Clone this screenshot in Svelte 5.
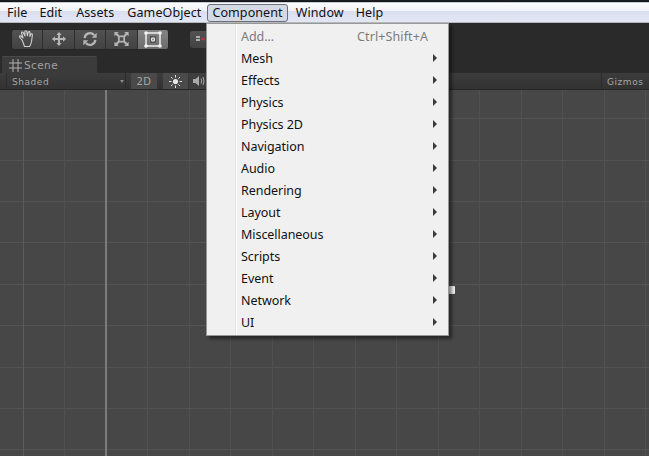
<script>
  const menuBar = ['File', 'Edit', 'Assets', 'GameObject', 'Component', 'Window', 'Help'];
  const items = ['Mesh', 'Effects', 'Physics', 'Physics 2D', 'Navigation', 'Audio', 'Rendering', 'Layout', 'Miscellaneous', 'Scripts', 'Event', 'Network', 'UI'];
</script>

<div class="app">
  <div class="titleline"></div>
  <nav class="menubar">
    {#each menuBar as m}
      <span class="mb" class:open={m === 'Component'}>{m}</span>
    {/each}
  </nav>

  <div class="toolbar">
    <div class="tools">
      <span class="tool">
        <svg width="20" height="20" viewBox="0 0 20 20"><path d="M5 11 L2.5 8 Q2 6.5 3.8 7 L6 9 L4.5 4 Q4.6 2.6 6 3.2 L8 7 L7.8 2.5 Q8.8 1 9.8 2.5 L10.4 6.8 L11.2 3 Q12.4 2 13 3.4 L12.8 7.4 L14 5 Q15.4 4.6 15.4 6 L14.6 12 Q14 15.5 12.6 17.5 L7.5 17.5 Q6.5 14 5 11 Z" fill="none" stroke="#cfcfcf" stroke-width="1.1" stroke-linejoin="round"/></svg>
      </span>
      <span class="tool">
        <svg width="16" height="16" viewBox="0 0 18 18"><path d="M9 1 L12 4.5 H10.2 V7.8 H13.5 V6 L17 9 L13.5 12 V10.2 H10.2 V13.5 H12 L9 17 L6 13.5 H7.8 V10.2 H4.5 V12 L1 9 L4.5 6 V7.8 H7.8 V4.5 H6 Z" fill="#b4b4b4"/></svg>
      </span>
      <span class="tool">
        <svg width="16" height="16" viewBox="0 0 18 18"><path d="M3 8 A6 6 0 0 1 13.6 4.6 M15 10 A6 6 0 0 1 4.4 13.4" fill="none" stroke="#b4b4b4" stroke-width="2.6"/><path d="M11 7.5 L16.5 7.5 L16.5 2 Z M7 10.5 L1.5 10.5 L1.5 16 Z" fill="#b4b4b4"/></svg>
      </span>
      <span class="tool">
        <svg width="17" height="16" viewBox="0 0 18 18"><rect x="6" y="6" width="6" height="6" fill="none" stroke="#b4b4b4" stroke-width="2"/><path d="M1 1 H6 L4.4 2.6 L6.5 4.7 L4.7 6.5 L2.6 4.4 L1 6 Z M17 1 V6 L15.4 4.4 L13.3 6.5 L11.5 4.7 L13.6 2.6 L12 1 Z M1 17 V12 L2.6 13.6 L4.7 11.5 L6.5 13.3 L4.4 15.4 L6 17 Z M17 17 H12 L13.6 15.4 L11.5 13.3 L13.3 11.5 L15.4 13.6 L17 12 Z" fill="#b4b4b4"/></svg>
      </span>
      <span class="tool active">
        <svg width="18" height="17" viewBox="0 0 18 17"><rect x="2" y="2" width="14" height="13" fill="none" stroke="#f0f0f0" stroke-width="1.5"/><rect x="6.5" y="5.5" width="5" height="6" fill="none" stroke="#4a4a4a" stroke-width="0.8"/><circle cx="9" cy="8.5" r="1.5" fill="none" stroke="#f0f0f0" stroke-width="1.2"/><circle cx="2" cy="2" r="1.8" fill="#f4f4f4"/><circle cx="16" cy="2" r="1.8" fill="#f4f4f4"/><circle cx="2" cy="15" r="1.8" fill="#f4f4f4"/><circle cx="16" cy="15" r="1.8" fill="#f4f4f4"/></svg>
      </span>
    </div>
    <div class="pivot">
      <svg width="12" height="8" viewBox="0 0 12 8"><path d="M0 2 H4 M0 5 H4" stroke="#ccc" stroke-width="1.5"/><circle cx="7" cy="4" r="1.6" fill="#c8303a"/></svg>
    </div>
  </div>

  <div class="tabstrip">
    <div class="tab">
      <svg width="13" height="13" viewBox="0 0 13 13"><path d="M4 0 V13 M9 0 V13 M0 4 H13 M0 9 H13" stroke="#b0b0b0" stroke-width="1"/></svg>
      <span>Scene</span>
    </div>
  </div>

  <div class="scenebar">
    <div class="shaded"><span>Shaded</span><i class="caret"></i></div>
    <div class="btn2d">2D</div>
    <div class="btnlight">
      <svg width="13" height="13" viewBox="0 0 13 13"><circle cx="6.5" cy="6.5" r="2.6" fill="#e8e8e8"/><path d="M6.5 0 V2.5 M6.5 10.5 V13 M0 6.5 H2.5 M10.5 6.5 H13 M2 2 L3.6 3.6 M9.4 9.4 L11 11 M11 2 L9.4 3.6 M3.6 9.4 L2 11" stroke="#e0e0e0" stroke-width="1"/></svg>
    </div>
    <div class="btnaudio">
      <svg width="13" height="12" viewBox="0 0 13 12"><path d="M0 4 H2.5 L6 1 V11 L2.5 8 H0 Z" fill="#a8a8a8"/><path d="M8 3.5 Q9.5 6 8 8.5 M10 2 Q12 6 10 10" fill="none" stroke="#a8a8a8"/></svg>
    </div>
    <div class="spacer"></div>
    <div class="gizmos">Gizmos</div>
  </div>

  <div class="canvas"></div>

  <div class="handle"></div>

  <div class="menu">
    <div class="row disabled"><span class="label">Add...</span><span class="shortcut">Ctrl+Shift+A</span></div>
    {#each items as it}
      <div class="row"><span class="label">{it}</span><i class="arrow"></i></div>
    {/each}
  </div>
</div>

<style>
  :global(body) { margin: 0; background: #2a2a2a; }
  .app {
    position: relative;
    width: 649px;
    height: 456px;
    overflow: hidden;
    display: flex;
    flex-direction: column;
    font-family: "Noto Sans", "DejaVu Sans", sans-serif;
  }
  .titleline {
    height: 3px;
    background: linear-gradient(#20242a 0, #0e1014 66%, #c9ccd2 66%);
  }
  .menubar {
    height: 20px;
    box-sizing: border-box;
    display: flex;
    align-items: center;
    padding-left: 2px;
    gap: 1px;
    background: linear-gradient(#fbfcfe 0, #f1f3f9 38%, #dadff0 40%, #e3e7f4 95%, #b6b8c0 95%);
    font-size: 12.5px;
    color: #111;
  }
  .mb {
    padding: 0 5px;
    height: 18px;
    line-height: 17px;
    box-sizing: border-box;
    letter-spacing: 0.1px;
  }
  .mb:nth-child(2) { margin-left: 1px; }
  .mb:nth-child(3) { margin-left: 3px; }
  .mb:nth-child(4) { margin-left: 2px; }
  .mb:nth-child(6) { margin-left: 2px; }
  .mb:nth-child(7) { margin-left: 1px; }
  .mb.open {
    border: 1px solid #6a6f7a;
    border-radius: 3px;
    background: #d4d9e6;
    line-height: 16px;
    padding: 0 4px;
    margin-left: 0;
  }
  .toolbar {
    height: 33px;
    background: #2a2a2a;
    display: flex;
    align-items: center;
    padding: 0 0 1px 11px;
    box-sizing: border-box;
    gap: 21px;
  }
  .tools {
    display: flex;
    height: 21px;
    border-radius: 3px;
    overflow: hidden;
    border: 1px solid #262626;
    box-sizing: border-box;
    width: 158px;
  }
  .tool {
    flex: 1;
    display: flex;
    align-items: center;
    justify-content: center;
    background: linear-gradient(#525252, #424242);
    border-right: 1px solid #2e2e2e;
  }
  .tool:last-child { border-right: 0; }
  .tool.active { background: linear-gradient(#848484, #6c6c6c); }
  .pivot {
    width: 30px;
    height: 17px;
    border-radius: 3px;
    background: linear-gradient(#525252, #424242);
    display: flex;
    align-items: center;
    padding-left: 6px;
    box-sizing: border-box;
  }
  .tabstrip {
    height: 17px;
    background: #2a2a2a;
    padding-left: 1px;
  }
  .tab {
    width: 97px;
    height: 17px;
    box-sizing: border-box;
    background: #3b3b3b;
    border: 1px solid #2c2c2c;
    border-top-color: #484848;
    border-bottom: 0;
    border-radius: 3px 3px 0 0;
    display: flex;
    align-items: center;
    padding-left: 7px;
    gap: 2px;
    color: #a0a0a0;
    font-family: "DejaVu Sans", sans-serif;
    font-size: 10.5px;
    letter-spacing: 0.4px;
  }
  .scenebar {
    height: 17px;
    box-sizing: border-box;
    display: flex;
    align-items: stretch;
    background: linear-gradient(#3c3c3c, #323232);
    border-bottom: 1px solid #262626;
    color: #a6a6a6;
    font-family: "DejaVu Sans", sans-serif;
    font-size: 9px;
    letter-spacing: 0.55px;
  }
  .shaded {
    width: 120px;
    margin-left: 6px;
    padding: 1px 0 0 5px;
    box-sizing: border-box;
    display: flex;
    align-items: center;
    justify-content: space-between;
    border-left: 1px solid #2b2b2b;
    border-right: 1px solid #2b2b2b;
  }
  .caret {
    width: 0;
    height: 0;
    border: 2.5px solid transparent;
    border-top: 3px solid #8a8a8a;
    border-bottom: 0;
    margin-right: 1px;
  }
  .btn2d {
    width: 26px;
    margin-left: 5px;
    padding-top: 1px;
    background: #494949;
    display: flex;
    align-items: center;
    justify-content: center;
    font-size: 10px;
  }
  .btnlight {
    width: 25px;
    margin-left: 6px;
    background: #4a4a4a;
    display: flex;
    align-items: center;
    justify-content: center;
  }
  .btnaudio {
    width: 25px;
    margin-left: 1px;
    display: flex;
    align-items: center;
    padding-left: 4px;
    background: #3e3e3e;
  }
  .spacer { flex: 1; }
  .gizmos {
    width: 48px;
    box-sizing: border-box;
    border-left: 1px solid #2b2b2b;
    padding: 1px 0 0 5px;
    display: flex;
    align-items: center;
  }
  .canvas {
    flex: 1;
    background-color: #474747;
    background-image:
      linear-gradient(90deg, transparent 105px, #7c7c7c 105px, #7c7c7c 107px, transparent 107px),
      linear-gradient(90deg, transparent 23px, #5b5b5b 23px, #5b5b5b 24px, transparent 24px),
      repeating-linear-gradient(90deg, transparent 0, transparent 22.6px, #515151 22.6px, #515151 23.6px, transparent 23.6px, transparent 41.5px),
      repeating-linear-gradient(0deg, transparent 0, transparent 5.6px, #535353 5.6px, #535353 6.6px, transparent 6.6px, transparent 41.4px);
  }
  .handle {
    position: absolute;
    left: 449px;
    top: 286px;
    width: 6px;
    height: 8px;
    background: #f2f2f2;
    border-radius: 0 1px 1px 0;
  }
  .menu {
    position: absolute;
    left: 206px;
    top: 23px;
    width: 243px;
    height: 313px;
    box-sizing: border-box;
    background: linear-gradient(90deg, #f0f0f0 0, #f0f0f0 28px, #e2e3e3 28px, #e2e3e3 29px, #fff 29px, #fff 30px, #f0f0f0 30px);
    border: 1px solid #979797;
    padding: 1px 2px;
    box-shadow: 3px 3px 3px rgba(0, 0, 0, 0.45);
    font-size: 12.5px;
    color: #111;
  }
  .row {
    height: 22px;
    display: flex;
    align-items: center;
    padding-left: 32px;
    position: relative;
  }
  .label { flex: 1; letter-spacing: -0.05px; }
  .disabled { color: #7c7c7c; }
  .shortcut { margin-right: 18px; letter-spacing: 0.1px; }
  .arrow {
    position: absolute;
    right: 9px;
    top: 7px;
    width: 0;
    height: 0;
    border: 4px solid transparent;
    border-left: 4px solid #3a3a3a;
    border-right: 0;
  }
</style>
